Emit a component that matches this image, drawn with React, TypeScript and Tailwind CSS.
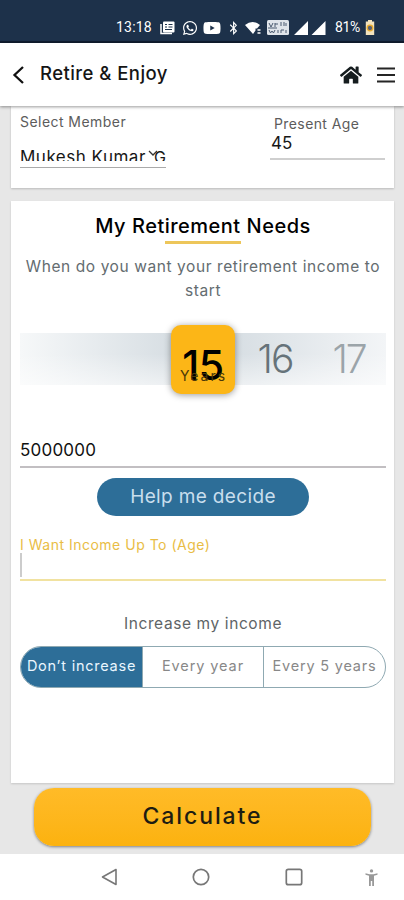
import React, { useState } from 'react';
import { FaHome, FaWhatsapp, FaYoutube, FaBluetoothB } from 'react-icons/fa';

const years = [15, 16, 17];
const increaseOptions = ['Don’t increase', 'Every year', 'Every 5 years'];
const segmentWidths = ['w-[121px] tracking-[0.75px]', 'w-[121px] tracking-[0.9px]', 'flex-1 tracking-[0.8px]'];

function StatusBar() {
  return (
    <div className="h-[43px] shrink-0 bg-[#1d314a] border-b-2 border-[#101c2e] flex items-end text-white text-[14px] font-[Roboto]">
      <div className="h-[27px] w-full pl-[116px] flex items-center">
        <span className="w-[44px] whitespace-nowrap tracking-[0.2px]">13:18</span>
        <svg className="w-[15px] h-[14px]" viewBox="0 0 15 14">
          <path d="M1 3v9.5h11" fill="none" stroke="#fff" strokeWidth="1.5" />
          <rect x="3" y="0.5" width="11.5" height="11" rx="1" fill="#fff" />
          <path d="M5 3.5h2M8.5 3.5h4M5 6h2M8.5 6h4M5 8.5h7" stroke="#1d314a" strokeWidth="1.1" />
        </svg>
        <FaWhatsapp className="w-[16px] h-[16px] ml-[7px]" />
        <FaYoutube className="w-[18px] h-[16px] ml-[5px]" preserveAspectRatio="none" />
        <FaBluetoothB className="w-[11px] h-[14px] ml-[7px]" />
        <svg className="w-[17px] h-[14px] ml-[6px]" viewBox="0 0 17 14">
          <path d="M0 4Q7.500 -2 15 4L12 7.500H10.500V9.500L8 13Z" fill="#fff" />
          <path d="M12.500 9h3M12.500 12h3" stroke="#fff" strokeWidth="1.300" />
        </svg>
        <svg className="w-[22px] h-[15px] ml-[5px]" viewBox="0 0 22 15">
          <rect width="22" height="15" rx="1.500" fill="#dfe4ea" />
          <path d="M2 3l2 4 2-4M8 3v4M8 4h3M14 2v4M17 2v4M19 3v3M1 8h9M2 10l1.500 3 1.500-2 1.500 2 1.500-3M11 10v3M14 10v3M14 10h3M19 10v3" fill="none" stroke="#4a5a70" strokeWidth="1" />
        </svg>
        <svg className="w-[32px] h-[14px] ml-[5px]" viewBox="0 0 32 14">
          <path d="M0 14L14 0v14ZM17.500 14L31.500 0v14Z" fill="#fff" />
        </svg>
        <span className="ml-[9px] w-[30px] whitespace-nowrap tracking-[-0.4px]">81%</span>
        <svg className="w-[10px] h-[15px]" viewBox="0 0 10 15">
          <path d="M3 0h4v1.500h2.200V15H.8V1.500H3Z" fill="#f3e3bd" />
          <circle cx="5" cy="8" r="2.800" fill="#5c6270" stroke="#e9aa2b" strokeWidth="1.300" />
        </svg>
      </div>
    </div>
  );
}

function Header() {
  return (
    <header className="h-[63px] shrink-0 bg-white relative z-10 shadow-[0_1px_3px_rgba(0,0,0,0.4)] flex items-center pl-[12px] pr-[9px]">
      <svg className="w-[13px] h-[20px]" viewBox="0 0 13 20">
        <path d="M11 2L2.500 10l8.500 8" fill="none" stroke="#111" strokeWidth="2.300" />
      </svg>
      <h1 className="ml-[15px] -mt-[2px] flex-1 text-[18.5px] font-medium text-[#151515] tracking-[0.45px]">Retire &amp; Enjoy</h1>
      <FaHome className="w-[22px] h-[20px] text-[#151c1e]" />
      <svg className="w-[18px] h-[16px] ml-[15px]" viewBox="0 0 18 16">
        <path d="M0 1.500h18M0 8h18M0 14.500h18" stroke="#252525" strokeWidth="2" />
      </svg>
    </header>
  );
}

function MemberCard() {
  return (
    <section className="ml-[11px] mr-[10px] h-[82px] shrink-0 bg-white shadow-[0_1px_2px_rgba(0,0,0,0.2)] px-[9px] flex justify-between">
      <div className="w-[146px] pt-[6px]">
        <div className="h-[20px] leading-[20px] text-[14px] text-[#5c5c5c] tracking-[0.45px] whitespace-nowrap">Select Member</div>
        <div className="mt-[13px] h-[16px] overflow-hidden relative whitespace-nowrap text-[17px] leading-[24px] text-[#171717] tracking-[0.5px]">
          <div>Mukesh Kumar</div>
          <span className="absolute left-[134px] top-0 text-[16px]">G</span>
          <svg className="absolute left-[128px] top-[5px] w-[10px] h-[7px]" viewBox="0 0 10 7">
            <path d="M1 1l4 4 4-4" fill="none" stroke="#333" strokeWidth="1.300" />
          </svg>
        </div>
        <div className="mt-[6px] h-px bg-[#aaa]" />
      </div>
      <div className="w-[115px] pt-[8px]">
        <div className="pl-[4px] h-[21px] leading-[20px] text-[14px] text-[#5c5c5c] tracking-[0.4px] whitespace-nowrap">Present Age</div>
        <div className="h-[23px] pl-[1px] leading-[17px] text-[17px] text-[#171717]">45</div>
        <div className="h-[2px] bg-[#cfcfcf]" />
      </div>
    </section>
  );
}

function YearPicker() {
  const [selected] = useState(15);
  return (
    <div className="mt-[31px] h-[52px] shrink-0 flex items-center bg-[linear-gradient(to_bottom,transparent_40%,rgba(255,255,255,0.55)),linear-gradient(to_right,#f6f8f9_0%,#d7dee3_42%,#d7dee3_58%,#f3f5f7_100%)]">
      <div className="w-[151px] shrink-0" />
      {years.map(year =>
        year === selected ? (
          <div key={year} className="relative w-[64px] h-[69px] shrink-0 rounded-[10px] bg-[#fcb617] shadow-[0_1px_7px_rgba(0,0,0,0.4)] text-center">
            <div className="pt-[17px] leading-[46px] text-[41px] font-medium text-black tracking-[-0.5px]">{year}</div>
            <div className="absolute inset-x-0 top-[42px] leading-[18px] text-[14px] tracking-[2px] indent-[1px] text-[#4b3908]">Years</div>
          </div>
        ) : (
          <div key={year} className={`text-[39px] leading-[52px] font-light text-center shrink-0 tracking-[-2px] ${year === 16 ? 'w-[80px] text-[#66737a]' : 'w-[68px] text-[#9ba4a9]'}`}>
            {year}
          </div>
        )
      )}
    </div>
  );
}

function NeedsCard() {
  const [increase, setIncrease] = useState(0);
  return (
    <section className="mt-[13px] ml-[11px] mr-[10px] h-[582px] shrink-0 bg-white shadow-[0_1px_2px_rgba(0,0,0,0.15)] pl-[9px] pr-[8px] flex flex-col">
      <h2 className="mt-[10px] h-[30px] leading-[30px] text-center text-[20px] font-medium text-black tracking-[0.5px] whitespace-nowrap">My Retirement Needs</h2>
      <div className="mx-auto w-[76px] h-[3px] bg-[#edc65a]" />
      <p className="mt-[11px] -mb-px text-center text-[15.5px] leading-[24px] text-[#646c70] tracking-[0.58px]">
        <span className="whitespace-nowrap">When do you want your retirement income to</span><br />start
      </p>

      <YearPicker />

      <div className="mt-[53px] h-[24px] leading-[24px] text-[17px] text-[#111] tracking-[0.2px]">5000000</div>
      <div className="mt-[4px] h-[2px] shrink-0 bg-[#c2bfc2]" />

      <button className="mt-[10px] ml-[77px] w-[212px] h-[38px] shrink-0 rounded-full bg-[#2d6e98] text-[#c9deed] text-[19px] tracking-[0.35px] whitespace-nowrap">Help me decide</button>

      <div className="mt-[19px] h-[20px] leading-[20px] text-[14px] text-[#e9bd45] tracking-[0.5px] whitespace-nowrap">I Want Income Up To (Age)</div>
      <div className="-mt-[2px] w-[2px] h-[24px] shrink-0 bg-[#ccc]" />
      <div className="mt-[2px] h-[2px] shrink-0 bg-[#f1e2a0]" />

      <div className="mt-[31px] h-[24px] leading-[24px] text-center text-[15.5px] text-[#5e6467] tracking-[0.6px] whitespace-nowrap">Increase my income</div>
      <div className="mt-[10px] h-[42px] shrink-0 flex rounded-full border border-[#8fa9b2] overflow-hidden">
        {increaseOptions.map((label, i) => (
          <button
            key={label}
            onClick={() => setIncrease(i)}
            className={`pb-[3px] text-[14.5px] whitespace-nowrap ${segmentWidths[i]} ${i > 0 ? 'border-l border-[#8fa9b2]' : ''} ${increase === i ? 'bg-[#2d6e98] text-[#eaf6ff]' : 'text-[#888]'}`}
          >
            {label}
          </button>
        ))}
      </div>
    </section>
  );
}

function NavBar() {
  return (
    <nav className="mt-auto h-[46px] shrink-0 bg-white flex items-center pl-[101px] text-[#777]">
      <svg className="w-[17px] h-[18px]" viewBox="0 0 17 18">
        <path d="M15 1.500v15L1.500 9Z" fill="none" stroke="currentColor" strokeWidth="1.600" strokeLinejoin="round" />
      </svg>
      <svg className="w-[18px] h-[18px] ml-[74px]" viewBox="0 0 18 18">
        <circle cx="9" cy="9" r="7.700" fill="none" stroke="currentColor" strokeWidth="1.700" />
      </svg>
      <svg className="w-[18px] h-[18px] ml-[75px]" viewBox="0 0 18 18">
        <rect x="1.300" y="1.300" width="15.400" height="15.400" rx="2" fill="none" stroke="currentColor" strokeWidth="1.700" />
      </svg>
      <svg className="w-[13px] h-[17px] ml-[62px] text-[#999]" viewBox="0 0 13 17">
        <circle cx="6.500" cy="1.900" r="1.700" fill="currentColor" />
        <path d="M.5 4.300l4 1h4l4-1v1.500l-3.500 1V17H7.200v-5H5.800v5H4V6.800l-3.500-1Z" fill="currentColor" />
      </svg>
    </nav>
  );
}

export default function App() {
  return (
    <div className="w-[404px] h-[900px] overflow-hidden bg-[#e7e7e7] flex flex-col font-[Inter,'Open_Sans',sans-serif]">
      <StatusBar />
      <Header />
      <MemberCard />
      <NeedsCard />
      <button className="mt-[5px] ml-[34px] w-[337px] h-[58px] pb-[2px] shrink-0 rounded-[20px] bg-linear-to-b from-[#ffbb27] to-[#fcb20e] shadow-[0_1px_3px_rgba(0,0,0,0.45)] text-[23px] font-medium text-[#1d1c12] tracking-[1.9px]">Calculate</button>
      <NavBar />
    </div>
  );
}
